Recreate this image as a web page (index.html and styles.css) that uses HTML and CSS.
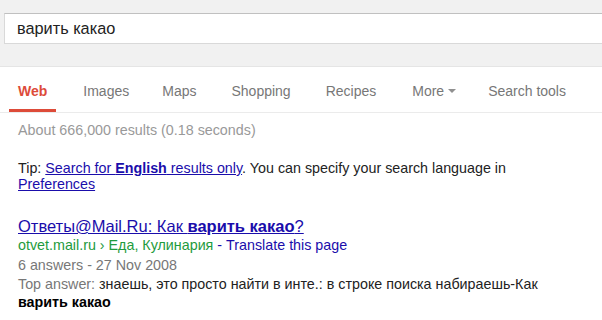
FILE: index.html
```html
<!DOCTYPE html>
<html>
<head>
<meta charset="utf-8">
<link rel="stylesheet" href="styles.css">
</head>
<body>
<div class="top">
  <div class="searchbox">варить какао</div>
</div>
<div class="tabs">
  <span class="tab active">Web</span>
  <span class="tab">Images</span>
  <span class="tab">Maps</span>
  <span class="tab">Shopping</span>
  <span class="tab">Recipes</span>
  <span class="tab">More<span class="caret"></span></span>
  <span class="tab">Search tools</span>
</div>
<div class="content">
  <div class="stats">About 666,000 results (0.18 seconds)</div>
  <div class="tip">Tip: <a href="#">Search for <b>English</b> results only</a>. You can specify your search language in <a href="#">Preferences</a></div>
  <div class="result">
    <a class="title" href="#">Ответы@Mail.Ru: Как <b>варить какао</b>?</a>
    <div class="url"><span class="green">otvet.mail.ru › Еда, Кулинария</span> - <a class="translate" href="#">Translate this page</a></div>
    <div class="meta">6 answers - 27 Nov 2008</div>
    <div class="snippet"><span class="label">Top answer:</span> знаешь, это просто найти в инте.: в строке поиска набираешь-Как <b>варить какао</b></div>
  </div>
</div>
</body>
</html>
```
FILE: styles.css
```css
html, body {
  margin: 0;
  padding: 0;
  background: #fff;
  font-family: "Liberation Sans", Arial, sans-serif;
}
.top {
  background: #f1f1f1;
  height: 67px;
  border-bottom: 1px solid #e5e5e5;
  padding-top: 13px;
  box-sizing: border-box;
  overflow: hidden;
}
.searchbox {
  margin-left: 4px;
  height: 31px;
  box-sizing: border-box;
  background: #fff;
  border: 1px solid #d9d9d9;
  border-top-color: #c0c0c0;
  border-right: none;
  padding-left: 12px;
  font-size: 16.3px;
  line-height: 29px;
  color: #222;
}
.tabs {
  display: flex;
  height: 46px;
  border-bottom: 1px solid #ebebeb;
  box-sizing: border-box;
  padding-left: 9px;
}
.tab {
  font-size: 14px;
  color: #777;
  padding: 16px 9px 0;
  line-height: 16px;
  box-sizing: border-box;
  margin-right: 8px;
}
.tab.active {
  color: #dd4b39;
  font-weight: bold;
  border-bottom: 3px solid #dd4b39;
  margin-right: 18px;
}
.tab:nth-child(2) { margin-right: 15px; }
.tab:nth-child(3) { margin-right: 17px; }
.tab:nth-child(4) { margin-right: 17px; }
.tab:nth-child(5) { margin-right: 18px; }
.tab:nth-child(6) { margin-right: 14px; }
.caret {
  display: inline-block;
  width: 0;
  height: 0;
  border-left: 4px solid transparent;
  border-right: 4px solid transparent;
  border-top: 4px solid #909090;
  margin-left: 4px;
  vertical-align: 3px;
}
.content {
  padding-left: 18px;
  font-size: 14.3px;
}
.stats {
  color: #999;
  padding-top: 8px;
  line-height: 18px;
}
.tip {
  color: #222;
  margin-top: 21px;
  line-height: 16px;
  width: 540px;
}
a {
  color: #1a0dab;
}
.result {
  margin-top: 24px;
}
.title {
  font-size: 16.5px;
  line-height: 20px;
  display: inline-block;
}
.url {
  line-height: 19px;
  color: #1a0dab;
}
.green {
  color: #1e9b3d;
}
.translate {
  text-decoration: none;
}
.meta {
  color: #777;
  line-height: 20px;
}
.label {
  color: #777;
}
.snippet {
  color: #222;
  line-height: 18px;
  width: 560px;
}
.snippet b {
  color: #000;
}
```
